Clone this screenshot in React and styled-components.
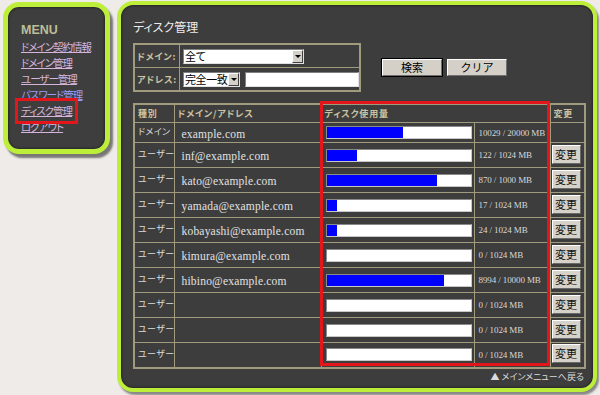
import styled, { createGlobalStyle } from 'styled-components';

const GlobalStyle = createGlobalStyle`
  html, body {
    margin: 0;
    padding: 0;
    background: #eeebe8;
  }
  body {
    font-family: "Noto Sans CJK JP", "Liberation Sans", sans-serif;
    font-feature-settings: "palt";
  }
`;

const lime = '#bdef3a';
const rule = '#a09b7c';

const menuItems = [
  { label: 'ドメイン契約情報' },
  { label: 'ドメイン管理' },
  { label: 'ユーザー管理' },
  { label: 'パスワード管理', fresh: true },
  { label: 'ディスク管理', current: true },
  { label: 'ログアウト' },
];

const rows = [
  { type: 'ドメイン', name: 'example.com', pct: 53.4, usage: '10029 / 20000 MB', domain: true },
  { type: 'ユーザー', name: 'inf@example.com', pct: 21.2, usage: '122 / 1024 MB' },
  { type: 'ユーザー', name: 'kato@example.com', pct: 76.7, usage: '870 / 1000 MB' },
  { type: 'ユーザー', name: 'yamada@example.com', pct: 7.5, usage: '17 / 1024 MB' },
  { type: 'ユーザー', name: 'kobayashi@example.com', pct: 7.5, usage: '24 / 1024 MB' },
  { type: 'ユーザー', name: 'kimura@example.com', pct: 0, usage: '0 / 1024 MB' },
  { type: 'ユーザー', name: 'hibino@example.com', pct: 81.5, usage: '8994 / 10000 MB' },
  { type: 'ユーザー', name: '', pct: 0, usage: '0 / 1024 MB' },
  { type: 'ユーザー', name: '', pct: 0, usage: '0 / 1024 MB' },
  { type: 'ユーザー', name: '', pct: 0, usage: '0 / 1024 MB' },
];

const App = () => {
  return (
    <>
      <GlobalStyle />
      <Page>
        <Menu>
          <MenuTitle>MENU</MenuTitle>
          {menuItems.map((item) => (
            <MenuLink key={item.label} $fresh={item.fresh} $current={item.current}>
              {item.label}
            </MenuLink>
          ))}
        </Menu>

        <Panel>
          <Title>ディスク管理</Title>

          <FilterRow>
            <FilterTable>
              <tbody>
                <tr>
                  <FilterLabel>ドメイン:</FilterLabel>
                  <FilterCell>
                    <FakeSelect $width={121}>
                      全て
                      <ArrowBox><Arrow /></ArrowBox>
                    </FakeSelect>
                  </FilterCell>
                </tr>
                <tr>
                  <FilterLabel>アドレス:</FilterLabel>
                  <FilterCell>
                    <FakeSelect $width={57}>
                      完全一致
                      <ArrowBox><Arrow /></ArrowBox>
                    </FakeSelect>
                    <TextBox />
                  </FilterCell>
                </tr>
              </tbody>
            </FilterTable>
            <ButtonGroup>
              <FormButton $primary>検索</FormButton>
              <FormButton>クリア</FormButton>
            </ButtonGroup>
          </FilterRow>

          <TableWrap>
            <DiskTable>
              <colgroup>
                <col style={{ width: 40 }} />
                <col style={{ width: 147 }} />
                <col style={{ width: 153 }} />
                <col style={{ width: 76 }} />
                <col style={{ width: 35 }} />
              </colgroup>
              <thead>
                <tr>
                  <Th>種別</Th>
                  <Th>ドメイン/アドレス</Th>
                  <Th colSpan={2}>ディスク使用量</Th>
                  <Th>変更</Th>
                </tr>
              </thead>
              <tbody>
                {rows.map((row, i) => (
                  <Row key={i} $domain={row.domain}>
                    <TypeCell>{row.type}</TypeCell>
                    <NameCell>{row.name}</NameCell>
                    <BarCell>
                      <Bar>
                        <BarFill style={{ width: `${row.pct}%` }} />
                      </Bar>
                    </BarCell>
                    <UsageCell>{row.usage}</UsageCell>
                    <EditCell>{!row.domain && <EditButton>変更</EditButton>}</EditCell>
                  </Row>
                ))}
              </tbody>
            </DiskTable>
            <Highlight />
          </TableWrap>

          <Footer>▲ メインメニューへ戻る</Footer>
        </Panel>
      </Page>
    </>
  );
};

const Page = styled.div`
  display: flex;
  align-items: flex-start;
  gap: 7px;
  width: 600px;
  height: 395px;
  padding: 1px 0 0 3px;
  box-sizing: border-box;
  overflow: hidden;
`;

const Menu = styled.nav`
  margin-top: 1px;
  width: 107px;
  height: 152px;
  box-sizing: border-box;
  border: 5px solid ${lime};
  border-radius: 16px;
  background: #3e3e3e;
  box-shadow: 3px 4px 2px rgba(70, 70, 70, 0.7), inset 0 0 3px rgba(0, 0, 0, 0.7);
  padding: 16px 0 0 13px;
`;

const MenuTitle = styled.div`
  font-family: "Liberation Sans", sans-serif;
  font-weight: bold;
  font-size: 12.5px;
  line-height: 14px;
  color: #bdbd98;
  margin-bottom: 2px;
`;

const MenuLink = styled.a`
  display: block;
  width: fit-content;
  font-size: 10.5px;
  line-height: 16px;
  letter-spacing: -1px;
  color: ${(p) => (p.$fresh ? '#9c9cf6' : '#d6b4dc')};
  text-decoration: underline;
  cursor: pointer;
  padding: 0 1px;
  margin-left: -1px;
  outline: ${(p) => (p.$current ? '3px solid #e3161c' : 'none')};
  outline-offset: 2px;
`;

const Panel = styled.main`
  width: 480px;
  height: 391px;
  box-sizing: border-box;
  border: 4px solid ${lime};
  border-radius: 16px;
  background: #3d3d3d;
  box-shadow: 2px 3px 2px rgba(70, 70, 70, 0.6), inset 0 0 3px rgba(0, 0, 0, 0.7);
  padding: 14px 9px 0 12px;
`;

const Title = styled.h1`
  margin: 0;
  font-size: 12px;
  font-weight: normal;
  line-height: 16px;
  color: #ececec;
`;

const FilterRow = styled.div`
  display: flex;
  align-items: center;
  gap: 21px;
  margin-top: 8px;
`;

const FilterTable = styled.table`
  border-collapse: collapse;
  border: 2px solid ${rule};
  width: 228px;
`;

const FilterLabel = styled.td`
  width: 42px;
  height: 22px;
  padding: 0 0 0 2px;
  border: 1px solid ${rule};
  font-size: 9px;
  font-weight: bold;
  letter-spacing: 0.8px;
  color: #cbc3a0;
  white-space: nowrap;
`;

const FilterCell = styled.td`
  border: 1px solid ${rule};
  padding: 0 0 0 3px;
  white-space: nowrap;
  font-size: 0;
`;

const FakeSelect = styled.div`
  display: inline-flex;
  align-items: center;
  vertical-align: middle;
  width: ${(p) => p.$width}px;
  height: 15px;
  box-sizing: border-box;
  border: 1px solid #808080;
  border-right-color: #e0e0e0;
  border-bottom-color: #e0e0e0;
  background: #fff;
  padding-left: 1px;
  font-size: 11px;
  letter-spacing: -0.4px;
  color: #000;
  overflow: hidden;
`;

const ArrowBox = styled.span`
  flex: none;
  margin-left: auto;
  width: 11px;
  height: 13px;
  box-sizing: border-box;
  background: #d4d0c8;
  border: 1px solid;
  border-color: #fff #404040 #404040 #fff;
  display: flex;
  align-items: center;
  justify-content: center;
`;

const Arrow = styled.span`
  width: 0;
  height: 0;
  border-left: 3px solid transparent;
  border-right: 3px solid transparent;
  border-top: 3px solid #000;
`;

const TextBox = styled.span`
  display: inline-block;
  vertical-align: middle;
  margin-left: 5px;
  width: 114px;
  height: 15px;
  box-sizing: border-box;
  border: 1px solid #808080;
  border-right-color: #e0e0e0;
  border-bottom-color: #e0e0e0;
  background: #fff;
`;

const ButtonGroup = styled.div`
  display: flex;
  gap: 5px;
`;

const FormButton = styled.button`
  width: 60px;
  height: 17px;
  box-sizing: border-box;
  padding: 0;
  font-family: "Noto Sans CJK JP", sans-serif;
  font-size: 11px;
  line-height: 13px;
  color: #000;
  background: #d4d0c8;
  border: 1px solid;
  border-color: #fff #707070 #707070 #fff;
  outline: ${(p) => (p.$primary ? '1px solid #000' : 'none')};
`;

const TableWrap = styled.div`
  position: relative;
  margin-top: 11px;
  width: 451px;
`;

const DiskTable = styled.table`
  width: 451px;
  table-layout: fixed;
  border-collapse: collapse;
  border: 2px solid ${rule};
`;

const Th = styled.th`
  height: 17px;
  padding: 0 0 0 3px;
  border: 1px solid ${rule};
  text-align: left;
  font-size: 9px;
  font-weight: bold;
  letter-spacing: 0.8px;
  color: #cbc3a0;
  white-space: nowrap;
`;

const Row = styled.tr`
  height: ${(p) => (p.$domain ? 20 : 25)}px;
`;

const Cell = styled.td`
  border: 1px solid ${rule};
  padding: 0;
  vertical-align: middle;
  white-space: nowrap;
  overflow: hidden;
`;

const TypeCell = styled(Cell)`
  padding: 0 0 3px 3px;
  font-size: 9px;
  letter-spacing: 0.4px;
  color: #dcdcdc;
`;

const NameCell = styled(Cell)`
  padding: 2px 0 0 7px;
  font-family: "Liberation Serif", serif;
  font-size: 11.5px;
  letter-spacing: 0.2px;
  color: #e2e2e2;
`;

const BarCell = styled(Cell)`
  padding: 0 0 0 4px;
`;

const Bar = styled.div`
  width: 146px;
  height: 13px;
  box-sizing: border-box;
  background: #fff;
  border: 1px solid #8a8a8a;
  border-right-color: #c8c8c8;
  border-bottom-color: #c8c8c8;
  overflow: hidden;
`;

const BarFill = styled.div`
  height: 100%;
  background: #0000ff;
`;

const UsageCell = styled(Cell)`
  padding: 0 0 0 4px;
  font-family: "Liberation Serif", serif;
  font-size: 9px;
  letter-spacing: -0.1px;
  color: #d8d8d8;
`;

const EditCell = styled(Cell)`
  padding: 0 0 0 1px;
`;

const EditButton = styled.button`
  display: block;
  width: 29px;
  height: 19px;
  padding: 0;
  box-sizing: border-box;
  font-family: "Noto Sans CJK JP", sans-serif;
  font-size: 11px;
  line-height: 15px;
  color: #111;
  background: #d6d2ca;
  border: 1px solid;
  border-color: #fff #6a6a6a #6a6a6a #fff;
  margin-bottom: 2px;
`;

const Highlight = styled.div`
  position: absolute;
  left: 187px;
  top: -2px;
  width: 230px;
  height: 265px;
  box-sizing: border-box;
  border: 3px solid #e3161c;
  pointer-events: none;
`;

const Footer = styled.div`
  margin-top: 1px;
  padding-right: 1px;
  width: 451px;
  text-align: right;
  font-size: 9px;
  color: #dadada;
`;

export default App;
